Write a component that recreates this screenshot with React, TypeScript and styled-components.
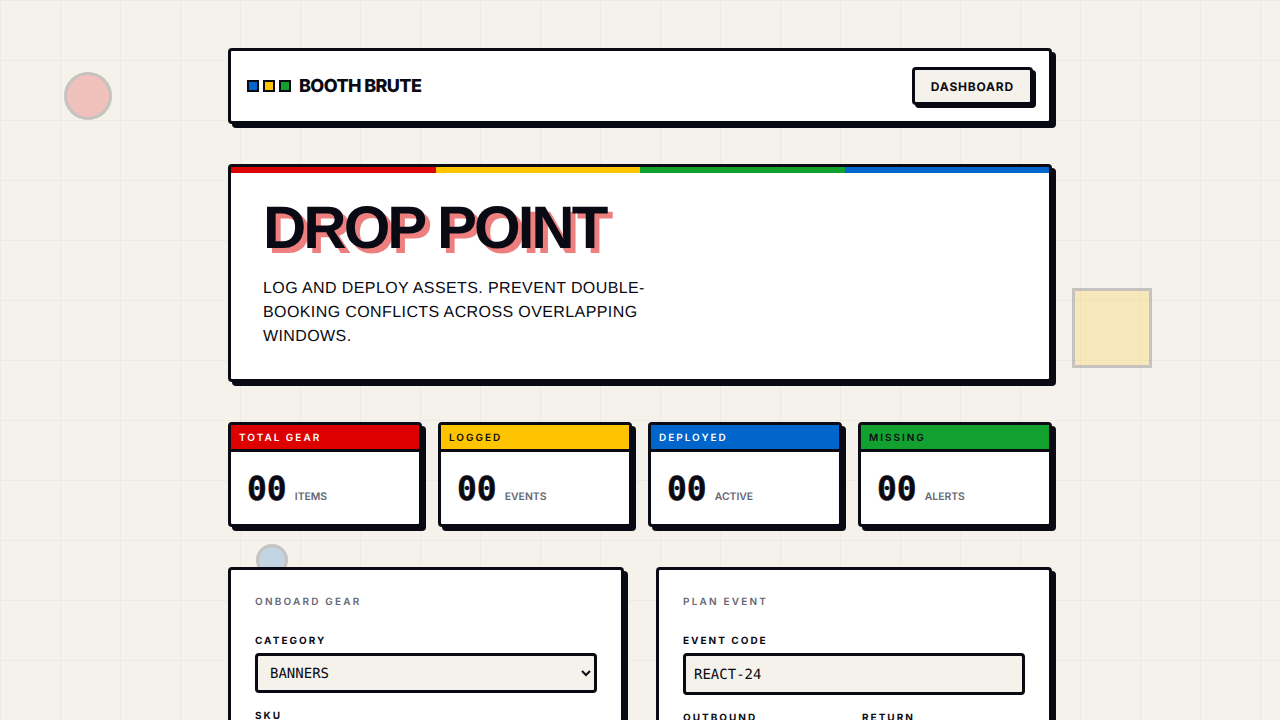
import styled, { createGlobalStyle } from 'styled-components';

const ink = '#0a0a14';
const paper = '#f5f2eb';
const red = '#dd0000';
const yellow = '#ffc400';
const blue = '#0066cc';
const green = '#12a12f';

const GlobalStyle = createGlobalStyle`
  * {
    box-sizing: border-box;
    text-rendering: geometricPrecision;
  }
  html, body {
    margin: 0;
    padding: 0;
  }
  body {
    min-height: 100vh;
    background-color: ${paper};
    background-image:
      linear-gradient(rgba(10, 10, 20, 0.03) 1px, transparent 1px),
      linear-gradient(90deg, rgba(10, 10, 20, 0.03) 1px, transparent 1px);
    background-size: 60px 60px;
    color: ${ink};
    font-family: 'Inter', sans-serif;
  }
  ::-webkit-scrollbar {
    display: none;
  }
`;

const Page = styled.div`
  position: relative;
  padding: 48px 0;
`;

const Circle = styled.div<{ $left: number; $top: number; $size: number; $color: string }>`
  position: absolute;
  left: ${(p) => p.$left}px;
  top: ${(p) => p.$top}px;
  width: ${(p) => p.$size}px;
  height: ${(p) => p.$size}px;
  border: 3px solid ${ink};
  border-radius: 50%;
  background: ${(p) => p.$color};
  opacity: 0.2;
`;

const Square = styled.div`
  position: absolute;
  left: 1072px;
  top: 288px;
  width: 80px;
  height: 80px;
  border: 3px solid ${ink};
  background: ${yellow};
  opacity: 0.2;
`;

const Container = styled.div`
  position: relative;
  width: 824px;
  margin: 0 auto;
  display: flex;
  flex-direction: column;
`;

const Header = styled.header`
  height: 76px;
  padding: 0 16px;
  display: flex;
  align-items: center;
  justify-content: space-between;
  background: #fff;
  border: 3px solid ${ink};
  border-radius: 4px;
  box-shadow: 4px 4px 0 ${ink};
  margin-bottom: 40px;
`;

const Brand = styled.div`
  display: flex;
  align-items: center;
  gap: 8px;
`;

const Dots = styled.div`
  display: flex;
  gap: 4px;
`;

const Dot = styled.span<{ $color: string }>`
  width: 12px;
  height: 12px;
  border: 2px solid ${ink};
  background: ${(p) => p.$color};
`;

const BrandName = styled.span`
  font-size: 18px;
  font-weight: 800;
  letter-spacing: -0.6px;
`;

const NavButton = styled.button`
  height: 38px;
  padding: 0 16px;
  background: ${paper};
  color: ${ink};
  border: 3px solid ${ink};
  border-radius: 4px;
  box-shadow: 3px 3px 0 ${ink};
  font-family: 'Inter', sans-serif;
  font-size: 12px;
  font-weight: 700;
  letter-spacing: 0.8px;
`;

const Hero = styled.section`
  background: #fff;
  border: 3px solid ${ink};
  border-radius: 4px;
  box-shadow: 4px 4px 0 ${ink};
  margin-bottom: 40px;
`;

const Stripe = styled.div`
  display: flex;
  height: 6px;
`;

const StripePart = styled.span<{ $color: string }>`
  flex: 1;
  background: ${(p) => p.$color};
`;

const HeroBody = styled.div`
  padding: 24px 32px 30px;
`;

const Title = styled.h1`
  margin: 0 0 18px;
  font-family: 'Liberation Sans', Arial, sans-serif;
  font-size: 60px;
  font-weight: 700;
  line-height: 62px;
  letter-spacing: -3px;
  text-shadow: 5px 5px 0 rgba(221, 0, 0, 0.5);
`;

const Lead = styled.p`
  margin: 0;
  max-width: 400px;
  font-family: 'Liberation Sans', Arial, sans-serif;
  font-size: 16px;
  line-height: 24px;
  letter-spacing: 0.4px;
`;

const StatGrid = styled.div`
  display: grid;
  grid-template-columns: repeat(4, 1fr);
  gap: 16px;
  margin-bottom: 40px;
`;

const StatCard = styled.div`
  background: #fff;
  border: 3px solid ${ink};
  border-radius: 4px;
  box-shadow: 4px 4px 0 ${ink};
`;

const StatHead = styled.div<{ $color: string; $light?: boolean }>`
  height: 27px;
  padding: 1px 8px 0;
  display: flex;
  align-items: center;
  background: ${(p) => p.$color};
  color: ${(p) => (p.$light ? '#fff' : ink)};
  border-bottom: 3px solid ${ink};
  font-size: 10px;
  font-weight: 600;
  letter-spacing: 2px;
`;

const StatBody = styled.div`
  height: 72px;
  padding: 0 16px;
  display: flex;
  align-items: center;
  gap: 8px;
`;

const StatValue = styled.span`
  font-family: 'DejaVu Sans Mono', monospace;
  font-size: 33px;
  font-weight: 700;
  line-height: 1;
  -webkit-text-stroke: 0.5px ${ink};
`;

const StatUnit = styled.span`
  margin-top: 16px;
  font-family: 'Inter', sans-serif;
  font-size: 10.4px;
  font-weight: 600;
  color: #666672;
`;

const PanelGrid = styled.div`
  display: grid;
  grid-template-columns: repeat(2, 1fr);
  gap: 32px;
`;

const Panel = styled.section`
  padding: 24px;
  background: #fff;
  border: 3px solid ${ink};
  border-radius: 4px;
  box-shadow: 4px 4px 0 ${ink};
`;

const PanelTitle = styled.h2`
  margin: 0 0 24px;
  padding-top: 1px;
  font-size: 10px;
  font-weight: 600;
  line-height: 15px;
  letter-spacing: 2.2px;
  color: #666672;
`;

const Field = styled.div`
  margin-bottom: 16px;
  min-width: 0;
`;

const FieldRow = styled.div`
  display: grid;
  grid-template-columns: repeat(2, 1fr);
  gap: 16px;
`;

const Label = styled.label`
  display: block;
  margin-bottom: 5px;
  padding-top: 1px;
  font-size: 10px;
  font-weight: 700;
  line-height: 13px;
  letter-spacing: 2px;
`;

const Select = styled.select`
  display: block;
  width: 100%;
  height: 40px;
  padding: 1px 8px 0;
  background: ${paper};
  color: ${ink};
  border: 3px solid ${ink};
  border-radius: 4px;
  font-family: 'DejaVu Sans Mono', monospace;
  font-size: 14px;
`;

const Input = styled.input`
  display: block;
  width: 100%;
  height: 42px;
  padding: 1px 8px 0;
  background: ${paper};
  color: ${ink};
  border: 3px solid ${ink};
  border-radius: 4px;
  font-family: 'DejaVu Sans Mono', monospace;
  font-size: 14px;
`;

const stats = [
  { name: 'TOTAL GEAR', color: red, light: true, unit: 'ITEMS' },
  { name: 'LOGGED', color: yellow, light: false, unit: 'EVENTS' },
  { name: 'DEPLOYED', color: blue, light: true, unit: 'ACTIVE' },
  { name: 'MISSING', color: green, light: false, unit: 'ALERTS' },
];

const App = () => {
  return (
    <Page>
      <GlobalStyle />
      <Circle $left={64} $top={72} $size={48} $color={red} />
      <Circle $left={256} $top={544} $size={32} $color={blue} />
      <Square />
      <Container>
        <Header>
          <Brand>
            <Dots>
              <Dot $color={blue} />
              <Dot $color={yellow} />
              <Dot $color={green} />
            </Dots>
            <BrandName>BOOTH BRUTE</BrandName>
          </Brand>
          <NavButton>DASHBOARD</NavButton>
        </Header>

        <Hero>
          <Stripe>
            <StripePart $color={red} />
            <StripePart $color={yellow} />
            <StripePart $color={green} />
            <StripePart $color={blue} />
          </Stripe>
          <HeroBody>
            <Title>DROP POINT</Title>
            <Lead>LOG AND DEPLOY ASSETS. PREVENT DOUBLE-BOOKING CONFLICTS ACROSS OVERLAPPING WINDOWS.</Lead>
          </HeroBody>
        </Hero>

        <StatGrid>
          {stats.map((stat) => (
            <StatCard key={stat.name}>
              <StatHead $color={stat.color} $light={stat.light}>{stat.name}</StatHead>
              <StatBody>
                <StatValue>00</StatValue>
                <StatUnit>{stat.unit}</StatUnit>
              </StatBody>
            </StatCard>
          ))}
        </StatGrid>

        <PanelGrid>
          <Panel>
            <PanelTitle>ONBOARD GEAR</PanelTitle>
            <Field>
              <Label>CATEGORY</Label>
              <Select defaultValue='BANNERS'>
                <option>BANNERS</option>
              </Select>
            </Field>
            <Field>
              <Label>SKU</Label>
              <Input />
            </Field>
          </Panel>
          <Panel>
            <PanelTitle>PLAN EVENT</PanelTitle>
            <Field>
              <Label>EVENT CODE</Label>
              <Input defaultValue='REACT-24' />
            </Field>
            <FieldRow>
              <Field>
                <Label>OUTBOUND</Label>
                <Input />
              </Field>
              <Field>
                <Label>RETURN</Label>
                <Input />
              </Field>
            </FieldRow>
          </Panel>
        </PanelGrid>
      </Container>
    </Page>
  );
};

export default App;
